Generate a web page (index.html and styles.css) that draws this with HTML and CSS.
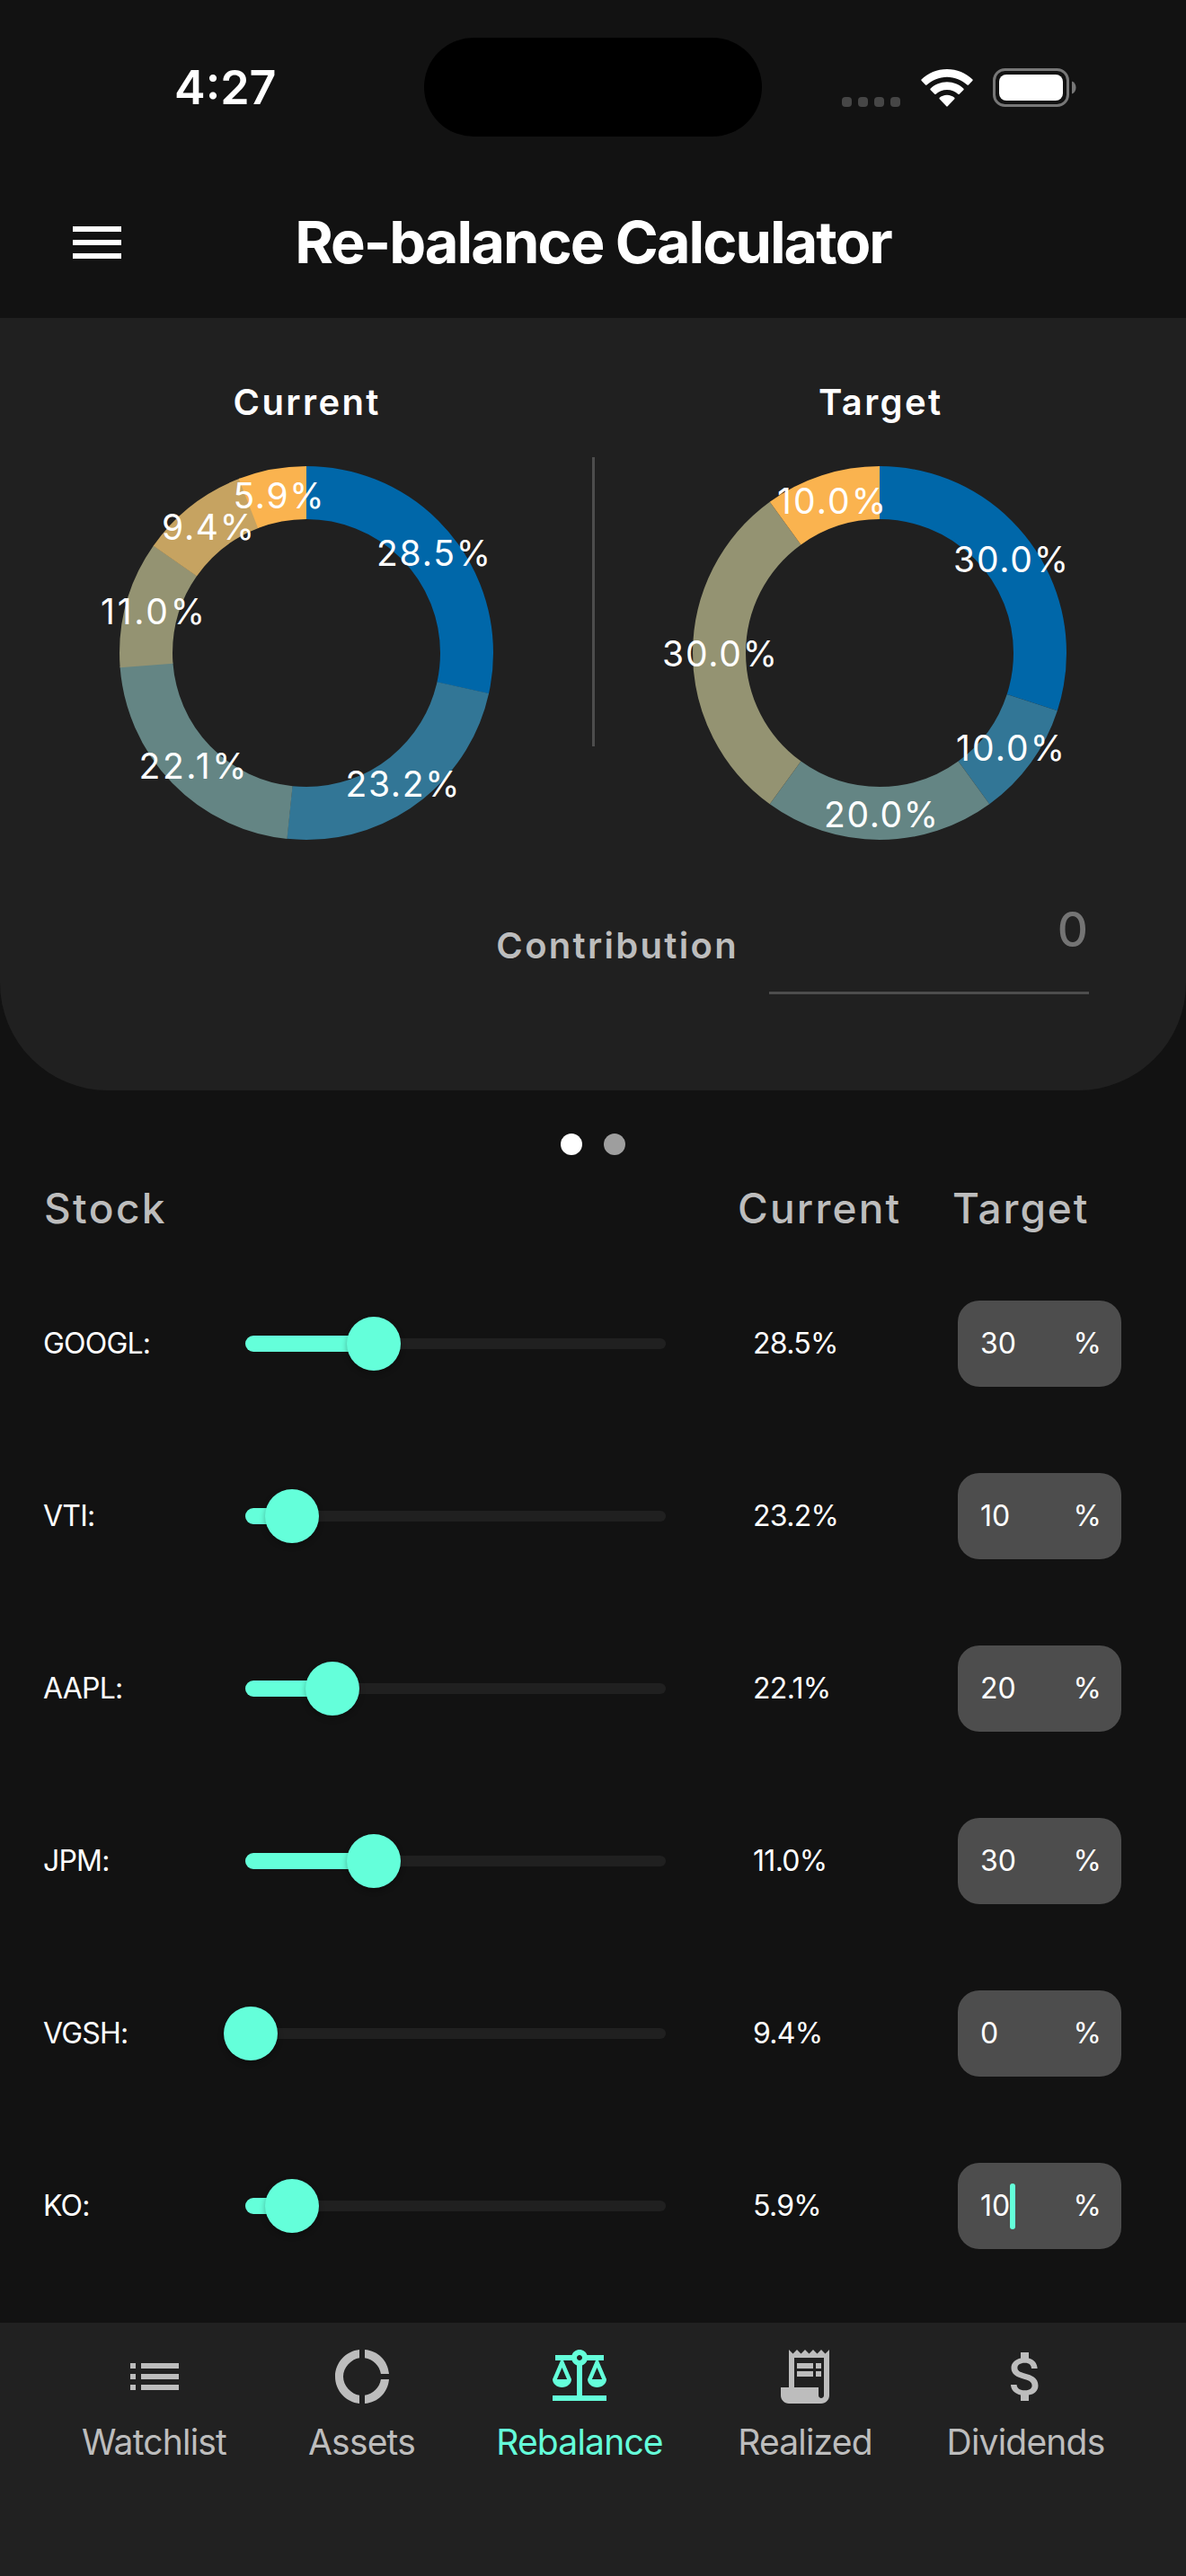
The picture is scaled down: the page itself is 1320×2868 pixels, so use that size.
FILE: index.html
```html
<!DOCTYPE html>
<html lang="en">
    <head>
        <title>Re-balance Calculator</title>
        <meta charset="UTF-8">
        <link rel="stylesheet" href="styles.css">
    </head>
    <body>
        <div class="status-bar">
            <div class="time">4:27</div>
            <div class="island"></div>
            <div class="status-icons">
                <div class="signal"><i></i><i></i><i></i><i></i></div>
                <svg class="wifi" width="58" height="42" viewBox="0 0 58 42">
                    <path d="M29 0C40 0 50.200 4.400 57.500 11.500Q58 12 57.500 12.700L53 17.500Q52.300 18.200 51.500 17.500C45.700 12.200 37.700 8.700 29 8.700S12.300 12.200 6.500 17.500Q5.700 18.200 5 17.500L.5 12.700Q0 12 .5 11.500C7.800 4.400 18 0 29 0z"/>
                    <path d="M29 14.300C36.200 14.300 42.700 17.100 47.500 21.700Q48 22.300 47.500 22.900L42.800 27.700Q42 28.400 41.300 27.800C38.100 25 33.800 23 29 23S19.900 25 16.700 27.800Q16 28.400 15.200 27.700L10.500 22.900Q10 22.300 10.500 21.700C15.300 17.100 21.800 14.300 29 14.300z"/>
                    <path d="M29 28.700C32.400 28.700 35.400 30 37.300 31.800Q38 32.500 37.300 33.200L29.700 41.300Q29 42 28.300 41.300L20.700 33.200Q20 32.500 20.700 31.800C22.600 30 25.600 28.700 29 28.700z"/>
                </svg>
                <svg class="battery" width="93" height="43" viewBox="0 0 93 43">
                    <rect x="1.500" y="1.500" width="82" height="40" rx="12" fill="none" stroke="#777" stroke-width="3"/>
                    <rect x="7" y="7" width="71" height="29" rx="8"/>
                    <path d="M88 14.500c6 2 6 12 0 14z" fill="#777"/>
                </svg>
            </div>
        </div>

        <div class="app-bar">
            <svg class="menu" width="72" height="72" viewBox="0 0 24 24"><path d="M3 18h18v-2H3v2zm0-5h18v-2H3v2zm0-7v2h18V6H3z"/></svg>
            <h1>Re-balance Calculator</h1>
        </div>

        <div class="panel">
            <div class="charts">
                <div class="chart">
                    <h2>Current</h2>
                    <svg class="donut" width="416" height="416" viewBox="133 519 416 416">
                        <g class="ring" transform="rotate(-90 341 727)">
                            <circle cx="341" cy="727" r="178.500" pathLength="100" stroke="#0067a9" stroke-dasharray="28.500 100"/>
                            <circle cx="341" cy="727" r="178.500" pathLength="100" stroke="#327696" stroke-dasharray="23.200 100" stroke-dashoffset="-28.470"/>
                            <circle cx="341" cy="727" r="178.500" pathLength="100" stroke="#648584" stroke-dasharray="22.200 100" stroke-dashoffset="-51.650"/>
                            <circle cx="341" cy="727" r="178.500" pathLength="100" stroke="#949372" stroke-dasharray="11 100" stroke-dashoffset="-73.750"/>
                            <circle cx="341" cy="727" r="178.500" pathLength="100" stroke="#c6a361" stroke-dasharray="9.500 100" stroke-dashoffset="-84.730"/>
                            <circle cx="341" cy="727" r="178.500" pathLength="100" stroke="#fab34f" stroke-dasharray="5.890 100" stroke-dashoffset="-94.110"/>
                        </g>
                        <text x="419" y="630" textLength="127">28.5%</text>
                        <text x="384.500" y="887" textLength="127">23.2%</text>
                        <text x="154.500" y="867" textLength="120">22.1%</text>
                        <text x="112" y="695" textLength="116">11.0%</text>
                        <text x="180" y="601" textLength="103">9.4%</text>
                        <text x="259.500" y="566" textLength="101">5.9%</text>
                    </svg>
                </div>
                <div class="divider"></div>
                <div class="chart">
                    <h2>Target</h2>
                    <svg class="donut" width="416" height="416" viewBox="771 519 416 416">
                        <g class="ring" transform="rotate(-90 979 727)">
                            <circle cx="979" cy="727" r="178.500" pathLength="100" stroke="#0067a9" stroke-dasharray="30 100"/>
                            <circle cx="979" cy="727" r="178.500" pathLength="100" stroke="#327696" stroke-dasharray="10 100" stroke-dashoffset="-30"/>
                            <circle cx="979" cy="727" r="178.500" pathLength="100" stroke="#648584" stroke-dasharray="20 100" stroke-dashoffset="-40"/>
                            <circle cx="979" cy="727" r="178.500" pathLength="100" stroke="#949372" stroke-dasharray="30 100" stroke-dashoffset="-60"/>
                            <circle cx="979" cy="727" r="178.500" pathLength="100" stroke="#fab34f" stroke-dasharray="10 100" stroke-dashoffset="-90"/>
                        </g>
                        <text x="1061" y="637" textLength="128">30.0%</text>
                        <text x="1064" y="847" textLength="121">10.0%</text>
                        <text x="917" y="921" textLength="127">20.0%</text>
                        <text x="737" y="742" textLength="128">30.0%</text>
                        <text x="865" y="572" textLength="121">10.0%</text>
                    </svg>
                </div>
            </div>
            <div class="contribution">
                <label>Contribution</label>
                <div class="field">0</div>
            </div>
        </div>

        <div class="dots"><i class="active"></i><i></i></div>

        <div class="row head">
            <span>Stock</span>
            <span></span>
            <span class="current">Current</span>
            <span class="target">Target</span>
        </div>

        <div class="stocks">
            <div class="row">
                <span class="ticker">GOOGL:</span>
                <div class="slider" style="--value: 30"><div class="fill"></div><div class="thumb"></div></div>
                <span class="current">28.5%</span>
                <div class="box"><span>30</span><span>%</span></div>
            </div>
            <div class="row">
                <span class="ticker">VTI:</span>
                <div class="slider" style="--value: 10"><div class="fill"></div><div class="thumb"></div></div>
                <span class="current">23.2%</span>
                <div class="box"><span>10</span><span>%</span></div>
            </div>
            <div class="row">
                <span class="ticker">AAPL:</span>
                <div class="slider" style="--value: 20"><div class="fill"></div><div class="thumb"></div></div>
                <span class="current">22.1%</span>
                <div class="box"><span>20</span><span>%</span></div>
            </div>
            <div class="row">
                <span class="ticker">JPM:</span>
                <div class="slider" style="--value: 30"><div class="fill"></div><div class="thumb"></div></div>
                <span class="current">11.0%</span>
                <div class="box"><span>30</span><span>%</span></div>
            </div>
            <div class="row">
                <span class="ticker">VGSH:</span>
                <div class="slider" style="--value: 0"><div class="fill"></div><div class="thumb"></div></div>
                <span class="current">9.4%</span>
                <div class="box"><span>0</span><span>%</span></div>
            </div>
            <div class="row">
                <span class="ticker">KO:</span>
                <div class="slider" style="--value: 10"><div class="fill"></div><div class="thumb"></div></div>
                <span class="current">5.9%</span>
                <div class="box"><span class="editing">10</span><span>%</span></div>
            </div>
        </div>

        <div class="nav">
            <a>
                <svg width="72" height="72" viewBox="0 0 24 24"><path d="M3 13h2v-2H3v2zm0 4h2v-2H3v2zm0-8h2V7H3v2zm4 4h14v-2H7v2zm0 4h14v-2H7v2zM7 7v2h14V7H7z"/></svg>
                <span>Watchlist</span>
            </a>
            <a>
                <svg width="72" height="72" viewBox="0 0 24 24"><path d="M11 5.080V2c-5 .5-9 4.810-9 10s4 9.500 9 10v-3.080c-3-.48-6-3.400-6-6.920s3-6.440 6-6.920zM18.970 11H22c-.47-5-4-8.530-9-9v3.080C16 5.510 18.540 8 18.970 11zM13 18.920V22c5-.47 8.530-4 9-9h-3.030c-.43 3-2.970 5.490-5.970 5.920z"/></svg>
                <span>Assets</span>
            </a>
            <a class="active">
                <svg width="72" height="72" viewBox="0 0 24 24"><path d="M13 7.830c.85-.3 1.530-.98 1.830-1.830H18l-3 7c0 1.660 1.570 3 3.500 3s3.500-1.340 3.500-3l-3-7h2V4h-6.170C14.420 2.830 13.310 2 12 2S9.580 2.830 9.170 4H3v2h2l-3 7c0 1.660 1.570 3 3.500 3S9 14.660 9 13L6 6h3.170c.3.85.98 1.530 1.830 1.830V19H2v2h20v-2h-9V7.830zM20.370 13h-3.740l1.870-4.360L20.370 13zM7.370 13H3.630L5.500 8.640 7.370 13zM12 6c-.55 0-1-.45-1-1s.45-1 1-1 1 .45 1 1-.45 1-1 1z"/></svg>
                <span>Rebalance</span>
            </a>
            <a>
                <svg width="72" height="72" viewBox="0 0 24 24"><path fill-rule="evenodd" d="M19.500 3.500L18 2l-1.500 1.500L15 2l-1.500 1.500L12 2l-1.500 1.500L9 2 7.500 3.500 6 2v14H3v3c0 1.660 1.340 3 3 3h12c1.660 0 3-1.340 3-3V2l-1.500 1.500zM19 19c0 .55-.45 1-1 1s-1-.45-1-1v-3H8V5h11v14z"/><path d="M9 7h6v2H9zM16 7h2v2h-2zM9 10h6v2H9zM16 10h2v2h-2z"/></svg>
                <span>Realized</span>
            </a>
            <a>
                <svg width="72" height="72" viewBox="0 0 24 24"><path d="M11.800 10.900c-2.270-.59-3-1.200-3-2.150 0-1.090 1.010-1.850 2.700-1.850 1.780 0 2.440.85 2.500 2.100h2.210c-.07-1.720-1.120-3.300-3.210-3.810V3h-3v2.160c-1.940.42-3.500 1.680-3.500 3.610 0 2.310 1.910 3.460 4.700 4.130 2.500.6 3 1.480 3 2.410 0 .69-.49 1.790-2.700 1.790-2.060 0-2.870-.92-2.980-2.100h-2.200c.12 2.190 1.760 3.420 3.680 3.830V21h3v-2.150c1.950-.37 3.500-1.500 3.500-3.550 0-2.840-2.430-3.810-4.700-4.400z"/></svg>
                <span>Dividends</span>
            </a>
        </div>
    </body>
</html>
```
FILE: styles.css
```css
* {
    box-sizing: border-box;
}

body {
    margin: 0;
    width: 1320px;
    height: 2868px;
    overflow: hidden;
    display: flex;
    flex-direction: column;
    background-color: #121212;
    color: white;
    font-family: Inter, sans-serif;
}

svg {
    display: block;
    fill: currentColor;
}

h1, h2 {
    margin: 0;
}

/* status bar */

.status-bar {
    display: grid;
    grid-template-columns: 472px 376px 472px;
    align-items: center;
    height: 186px;
    padding-top: 8px;
}

.time {
    padding-left: 194px;
    font-size: 52px;
    font-weight: 600;
}

.island {
    height: 110px;
    border-radius: 55px;
    background-color: black;
}

.status-icons {
    display: flex;
    align-items: flex-end;
    padding-left: 89px;
}

.signal {
    display: flex;
    gap: 7px;
    margin-right: 23px;
}

.signal i {
    width: 11px;
    height: 11px;
    border-radius: 4px;
    background-color: #464646;
}

.wifi {
    margin-right: 22px;
}

/* app bar */

.app-bar {
    display: grid;
    grid-template-columns: 72px 1fr 72px;
    align-items: center;
    height: 168px;
    padding: 0 72px;
}

h1 {
    padding-bottom: 2px;
    text-align: center;
    font-size: 65px;
    font-weight: 700;
    letter-spacing: -2px;
    white-space: nowrap;
}

/* top panel with the donuts */

.panel {
    height: 860px;
    padding-top: 70px;
    background-color: #202020;
    border-radius: 0 0 120px 120px;
}

.charts {
    display: grid;
    grid-template-columns: 1fr 3px 1fr;
    padding: 0 23px;
}

.chart {
    display: flex;
    flex-direction: column;
    align-items: center;
}

h2 {
    margin-bottom: 47px;
    padding-left: 2px;
    font-size: 40px;
    font-weight: 600;
    line-height: 48px;
    letter-spacing: 2.4px;
}

.donut {
    overflow: visible;
    font-size: 39px;
}

.ring {
    fill: none;
    stroke-width: 59;
}

.divider {
    height: 322px;
    margin-top: 85px;
    background-color: #4d4d4d;
}

.contribution {
    display: flex;
    justify-content: flex-end;
    gap: 34px;
    margin-top: 68px;
    padding-right: 108px;
}

.contribution label {
    margin-top: 26px;
    color: #bdbdbd;
    font-size: 40px;
    font-weight: 600;
    line-height: 48px;
    letter-spacing: 2.3px;
}

.field {
    width: 356px;
    height: 104px;
    padding-right: 1px;
    border-bottom: 3px solid #4d4d4d;
    color: #747474;
    font-size: 53px;
    font-weight: 500;
    line-height: 64px;
    text-align: right;
}

.dots {
    display: flex;
    justify-content: center;
    gap: 24px;
    padding-top: 48px;
}

.dots i {
    width: 24px;
    height: 24px;
    border-radius: 50%;
    background-color: #9e9e9e;
}

.dots .active {
    background-color: white;
}

/* stock table */

.row {
    display: grid;
    grid-template-columns: 225px 468px 325px 182px;
    align-items: center;
    height: 192px;
    padding-left: 48px;
    font-size: 32px;
}

.row span {
    padding-bottom: 2px;
}

.ticker {
    letter-spacing: -0.8px;
}

.row .current {
    padding-left: 97px;
    letter-spacing: -0.7px;
}

.head {
    height: 56px;
    margin: 31px 0 27px;
    padding-left: 49px;
    color: #bdbdbd;
    font-size: 46px;
    font-weight: 500;
    line-height: 56px;
    letter-spacing: 2.4px;
}

.head span {
    padding-bottom: 0;
}

.head .current {
    padding-left: 79px;
    letter-spacing: 2.2px;
}

.head .target {
    margin-left: -7px;
    letter-spacing: 1.9px;
}

.slider {
    position: relative;
    height: 12px;
    border-radius: 6px;
    background-color: #202020;
}

.fill {
    position: absolute;
    top: -3px;
    left: 0;
    width: calc(6px + var(--value) * 4.56px);
    height: 18px;
    border-radius: 9px;
    background-color: #64ffda;
}

.thumb {
    position: absolute;
    top: -24px;
    left: calc(var(--value) * 4.56px - 24px);
    width: 60px;
    height: 60px;
    border-radius: 50%;
    background-color: #64ffda;
    box-shadow: 0 3px 6px rgba(0, 0, 0, 0.3);
}

.box {
    display: flex;
    align-items: center;
    justify-content: space-between;
    height: 96px;
    padding: 0 22px 0 25px;
    border-radius: 24px;
    background-color: #4d4d4d;
}

.editing {
    position: relative;
}

/* text cursor */
.editing::after {
    content: "";
    position: absolute;
    top: -5px;
    right: -6px;
    width: 6px;
    height: 51px;
    border-radius: 3px;
    background-color: #64ffda;
}

/* bottom navigation */

.nav {
    display: grid;
    grid-template-columns: 231px 231px 254px 248px 243px;
    align-items: start;
    height: 282px;
    margin-top: auto;
    padding: 24px 56px 0;
    background-color: #212121;
    color: #bdbdbd;
}

.nav a {
    display: flex;
    flex-direction: column;
    align-items: center;
    gap: 13px;
    font-size: 39px;
    line-height: 48px;
    letter-spacing: -0.8px;
}

.nav .active {
    color: #64ffda;
}
```
